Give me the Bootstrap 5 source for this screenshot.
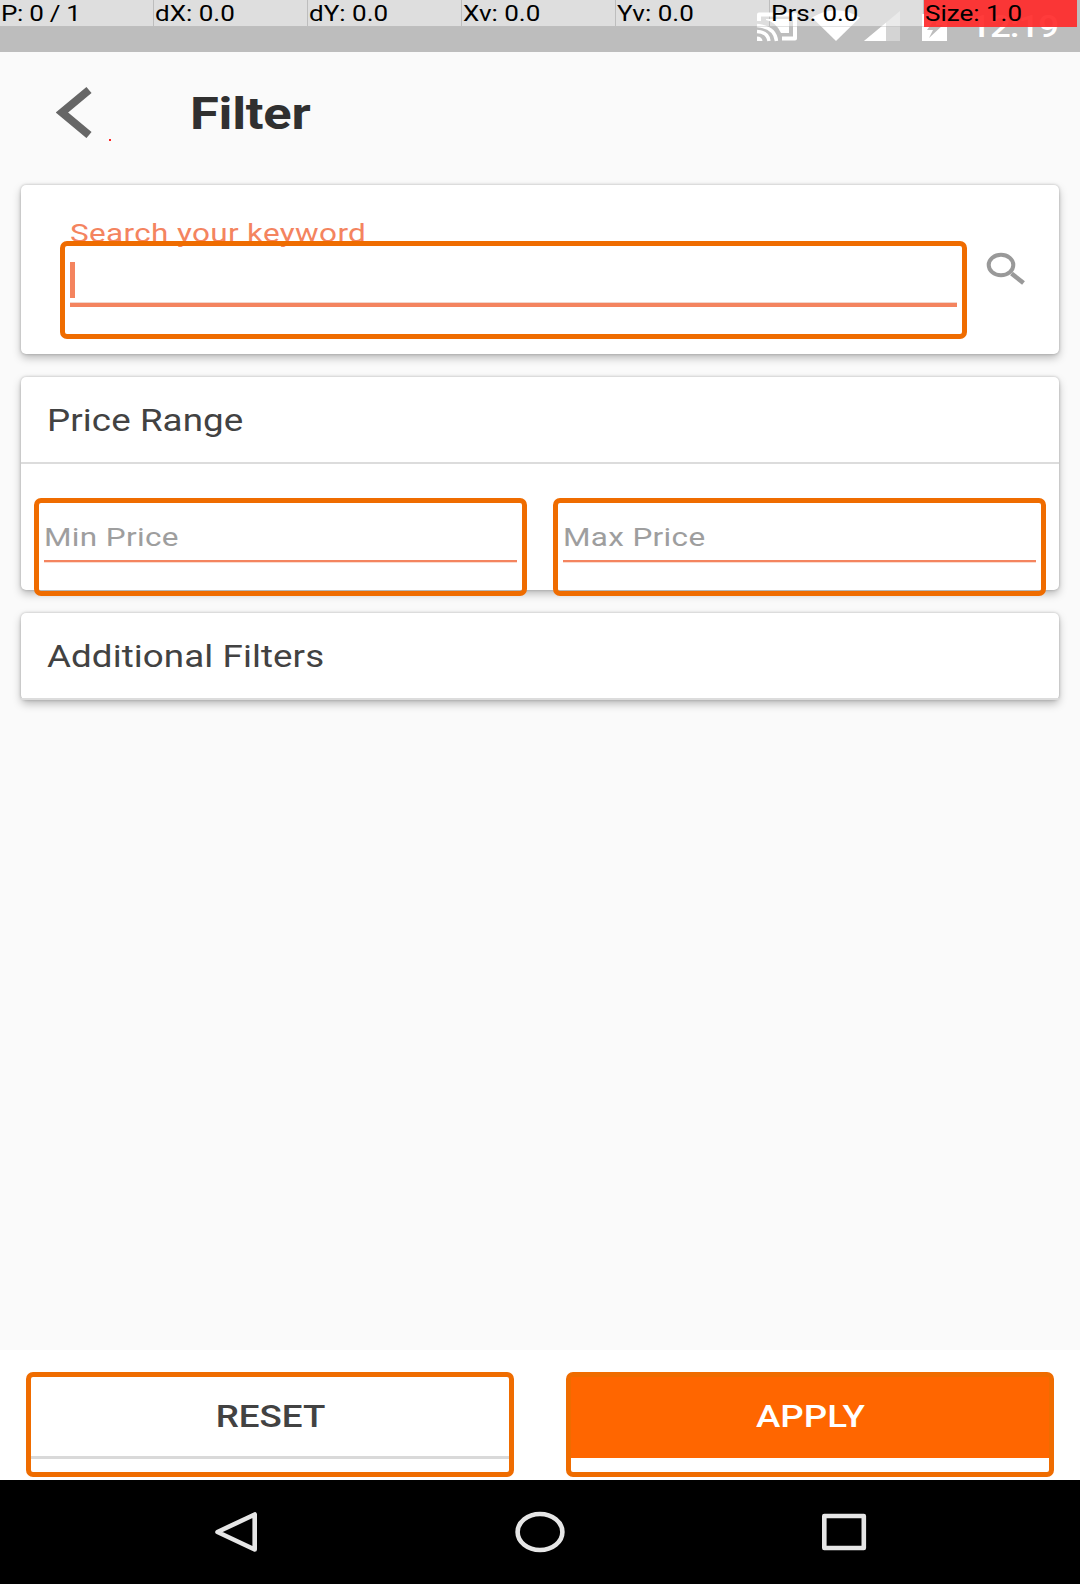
<!DOCTYPE html>
<html lang="en">
<head>
<meta charset="utf-8">
<meta name="viewport" content="width=device-width, initial-scale=1">
<title>Filter</title>
<link href="https://cdn.jsdelivr.net/npm/bootstrap@5.3.0/dist/css/bootstrap.min.css" rel="stylesheet">
<style>
  body { font-family: Roboto, "Liberation Sans", sans-serif; background: #fafafa; color: #424242; width: 1080px; height: 1584px; overflow: hidden; }
  /* wide letterforms: every label is flattened vertically around its centre */
  .wide { display: block; transform: scaleY(.835); white-space: nowrap; line-height: 40px; }
  svg { display: block; flex: none; }

  .status { height: 52px; background: #bdbdbd; }
  .status-icons { left: 750px; top: 0; }
  .clock { left: 970px; top: 7px; color: #fff; font-size: 36.75px; font-weight: 500; letter-spacing: -1px; }
  .pointer-bar { top: 0; left: 0; height: 27px; width: 1077px; color: #000; font-size: 26px; border-bottom: 1px solid rgba(190,190,190,.45); }
  .pointer-cell { width: 153px; margin-right: 1px; background: rgba(255,255,255,.5); padding-left: 1px; height: 26px; }
  .pointer-cell .wide { line-height: 27px; }
  .pointer-cell:first-child .wide { letter-spacing: -.3px; }
  .pointer-cell.hot { background: rgba(255,42,42,.92); margin-right: 0; height: 27px; }

  .app-bar { height: 133px; padding-left: 56px; }
  .app-bar h1 { font-size: 52.5px; font-weight: 700; color: #303030; margin: 0 0 10px 96px; letter-spacing: -.25px; }
  .app-bar h1 .wide { line-height: 60px; }
  .dot { width: 2px; height: 2px; background: #f22; left: 109px; top: 139px; }

  .panel { width: 1038px; margin-left: 21px; border: 0; border-radius: 5px; --bs-card-color: #424242; box-shadow: 0 0 3px rgba(0,0,0,.25), 0 4px 9px rgba(0,0,0,.25); }
  .panel-title { font-size: 36.75px; padding: 2px 0 0 26px; height: 87px; flex: none; border-bottom: 2px solid #dcdcdc; letter-spacing: .08px; }
  .outlined { border: 5px solid #ef6c00; border-radius: 7px; }
  .float-label { left: 49px; top: 29px; font-size: 31.5px; color: #f4845f; letter-spacing: .33px; }
  .keyword { width: 907px; height: 98px; margin: 56px 0 0 39px; padding: 16px 5px 0; z-index: 1; }
  .caret { width: 5px; height: 36px; background: #f4845f; }
  .rule-active { height: 5px; margin-top: 4px; background: #f4845f; border-top: 1px solid #f1d5cc; }
  .price { width: 493px; height: 98px; padding: 15px 5px 0; font-size: 31.5px; color: #9e9e9e; letter-spacing: .33px; }
  .price .rule { height: 3px; margin-top: 2px; background: #f4845f; border-bottom: 1px solid #fbdccf; }

  .actions { height: 130px; background: #fff; padding: 22px 26px 0; }
  .action { width: 488px; height: 105px; padding: 0; font-size: 36.75px; font-weight: 500; background: #fff; color: #424242; line-height: 80px; }
  .action .wide { line-height: 80px; padding-left: 1px; }
  .action .face { height: 82px; border-bottom: 3px solid #d9d9d9; }
  .action-apply .face { height: 81px; background: #ff6600; color: #fff; border: 0; }
  .nav-keys { height: 104px; background: #000; padding-left: 215px; }
</style>
<script src="https://cdn.jsdelivr.net/npm/bootstrap@5.3.0/dist/js/bootstrap.bundle.min.js"></script>
</head>
<body class="d-flex flex-column">

<header class="status position-relative flex-shrink-0">
  <svg class="status-icons position-absolute" width="210" height="52" viewBox="750 0 210 52">
    <!-- cast -->
    <path d="M759 21V14.5H795V38.5H782" fill="none" stroke="#fff" stroke-width="4" stroke-linejoin="round"/>
    <path d="M766 19H789V33H781Q776 22 766 20Z" fill="#fff"/>
    <path d="M757 36.5Q762 36.500 762.500 41H757Z" fill="#fff"/>
    <path d="M757 31.500Q768 32 769 41M757 25.500Q775 27 776.500 41" fill="none" stroke="#fff" stroke-width="3.400"/>
    <!-- wifi -->
    <path d="M836 41L812 17.500Q836 3 860 17.500Z" fill="#fff"/>
    <!-- signal -->
    <path d="M864 41L900 11V41Z" fill="#fff" fill-opacity=".35"/>
    <path d="M864 41L886 22.700V41Z" fill="#fff"/>
    <!-- battery -->
    <path fill-rule="evenodd" d="M922 14H929V10H940V14H947V41H922ZM937 16L927 30H933L929 38L943 25H936Z" fill="#fff"/>
  </svg>
  <div class="clock position-absolute"><span class="wide">12:19</span></div>
  <div class="pointer-bar position-absolute d-flex">
    <div class="pointer-cell"><span class="wide">P: 0 / 1</span></div>
    <div class="pointer-cell"><span class="wide">dX: 0.0</span></div>
    <div class="pointer-cell"><span class="wide">dY: 0.0</span></div>
    <div class="pointer-cell"><span class="wide">Xv: 0.0</span></div>
    <div class="pointer-cell"><span class="wide">Yv: 0.0</span></div>
    <div class="pointer-cell"><span class="wide">Prs: 0.0</span></div>
    <div class="pointer-cell hot"><span class="wide">Size: 1.0</span></div>
  </div>
</header>

<div class="app-bar d-flex align-items-center flex-shrink-0">
  <svg width="38" height="52" viewBox="0 0 38 52" style="margin-bottom:13px"><path d="M33 4L6 26.500L33 49" fill="none" stroke="#666" stroke-width="8"/></svg>
  <h1><span class="wide">Filter</span></h1>
  <i class="dot position-absolute"></i>
</div>

<main class="flex-grow-1">
  <section class="card panel flex-row position-relative" style="height:169px">
    <label class="float-label position-absolute"><span class="wide">Search your keyword</span></label>
    <div class="keyword outlined">
      <div class="caret"></div>
      <div class="rule-active"></div>
    </div>
    <svg width="42" height="36" viewBox="985 250 42 36" style="margin:65px 0 0 18px">
      <ellipse cx="1001" cy="265" rx="12.300" ry="10.200" fill="none" stroke="#999" stroke-width="4"/>
      <path d="M1011.500 273.500L1023.500 283" stroke="#999" stroke-width="4.500"/>
    </svg>
  </section>

  <section class="card panel" style="height:213px;margin-top:23px">
    <div class="panel-title d-flex align-items-center"><span class="wide">Price Range</span></div>
    <div class="d-flex" style="padding:34px 0 0 13px;gap:26px">
      <div class="price outlined"><span class="wide">Min Price</span><div class="rule"></div></div>
      <div class="price outlined"><span class="wide">Max Price</span><div class="rule"></div></div>
    </div>
  </section>

  <section class="card panel" style="height:87px;margin-top:23px">
    <div class="panel-title d-flex align-items-center"><span class="wide">Additional Filters</span></div>
  </section>
</main>

<div class="actions d-flex justify-content-between flex-shrink-0">
  <button class="action outlined text-center d-flex flex-column"><span class="face w-100"><span class="wide">RESET</span></span></button>
  <button class="action action-apply outlined text-center d-flex flex-column"><span class="face w-100"><span class="wide">APPLY</span></span></button>
</div>

<nav class="nav-keys d-flex align-items-center flex-shrink-0">
  <svg width="652" height="42" viewBox="215 1511 652 42" fill="none" stroke="#e6e6e6" stroke-width="4.600" stroke-linejoin="round">
    <path d="M254.700 1514.500V1549.500L217.500 1532Z"/>
    <ellipse cx="540" cy="1532" rx="22.400" ry="18"/>
    <rect x="824.300" y="1516" width="39.500" height="32"/>
  </svg>
</nav>
</body>
</html>
